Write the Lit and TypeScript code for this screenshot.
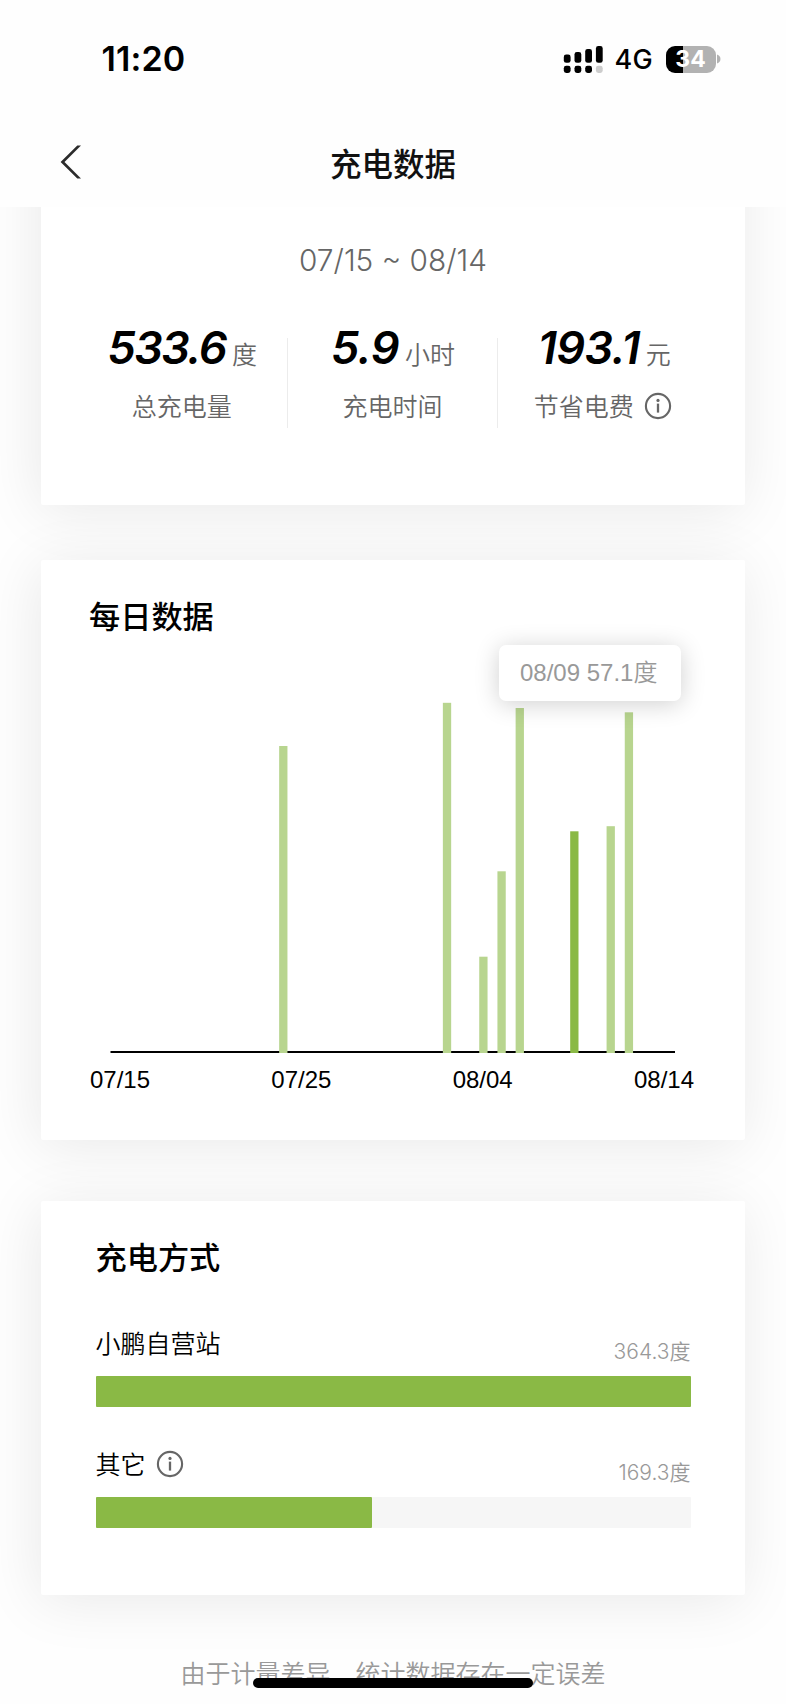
import { LitElement, html, css, svg } from "lit";
import { customElement } from "lit/decorators.js";
import { styleMap } from "lit/directives/style-map.js";

interface Bar {
  day: number;
  height: number;
  active?: boolean;
}

const BAND = 18.19;
const CHART_HEIGHT = 352;

const bars: Bar[] = [
  { day: 9, height: 307 },
  { day: 18, height: 350.2 },
  { day: 20, height: 96.3 },
  { day: 21, height: 181.7 },
  { day: 22, height: 345 },
  { day: 25, height: 221.7, active: true },
  { day: 27, height: 226.8 },
  { day: 28, height: 340.7 },
];

const infoIcon = html`<svg class="info" width="28" height="28" viewBox="0 0 28 28">
  <circle cx="14" cy="14" r="12.1" fill="none" stroke="#666" stroke-width="2.1" />
  <circle cx="14" cy="8.4" r="1.6" fill="#666" />
  <path d="M14 11.6V20.6" stroke="#666" stroke-width="2.3" />
</svg>`;

@customElement("app-root")
export class AppRoot extends LitElement {
  static styles = css`
    :host {
      display: block;
      font-family: Inter, "Noto Sans CJK SC", sans-serif;
    }
    .screen {
      position: relative;
      display: flex;
      flex-direction: column;
      width: 786px;
      height: 1704px;
      overflow: hidden;
      background: #fefefe;
      color: #000;
    }
    .status {
      display: flex;
      align-items: center;
      justify-content: space-between;
      height: 118px;
      box-sizing: border-box;
      padding: 0 65px 0 101.5px;
    }
    .time {
      font-size: 34px;
      font-weight: 600;
      letter-spacing: 0.1px;
      padding-bottom: 2px;
    }
    .indicators {
      display: flex;
      align-items: center;
    }
    .signal {
      margin-right: 12px;
    }
    .net {
      font-size: 27px;
      letter-spacing: 0.2px;
      font-weight: 450;
      width: 51px;
      line-height: 30px;
      padding-top: 1px;
      box-sizing: border-box;
    }
    .battery {
      display: flex;
      align-items: center;
      gap: 1.5px;
    }
    .cell {
      width: 50px;
      height: 27px;
      border-radius: 9px;
      background: linear-gradient(90deg, #000 17.5px, #b2b2b2 17.5px);
      color: #fff;
      font-size: 23px;
      font-weight: 700;
      line-height: 27px;
      text-align: center;
    }
    .nav {
      display: grid;
      grid-template-columns: 100px 1fr 100px;
      align-items: center;
      height: 89px;
    }
    .back {
      display: block;
      margin-left: 60px;
      margin-top: -1px;
    }
    .title {
      text-align: center;
      font-size: 31.5px;
      font-weight: 500;
      line-height: 40px;
      padding-top: 4px;
      color: #111;
    }
    .content {
      flex: 1;
      overflow: hidden;
      padding: 0 41px;
    }
    .card {
      box-sizing: border-box;
      width: 704px;
      background: #fff;
      border-radius: 2px;
      box-shadow: -3px 6px 58px rgba(0, 0, 0, 0.085);
    }
    .summary {
      height: 398px;
      margin-top: -100px;
      padding-top: 131px;
    }
    .daily {
      height: 580px;
      margin-top: 55px;
      padding: 36px 0 0;
    }
    .methods {
      height: 394px;
      margin-top: 61px;
      padding: 36px 54.5px 0;
    }
    .range {
      text-align: center;
      font-size: 29.8px;
      font-weight: 330;
      line-height: 44px;
      color: #666;
    }
    .stats {
      display: grid;
      grid-template-columns: repeat(3, 210.8px);
      justify-content: center;
      margin-top: 56px;
    }
    .stat {
      box-sizing: border-box;
      height: 90px;
      border-right: 1px solid #ececec;
      display: flex;
      flex-direction: column;
      align-items: center;
    }
    .stat:last-child {
      border-right: none;
    }
    .figure {
      display: flex;
      align-items: baseline;
      gap: 6px;
      line-height: 50px;
      height: 50px;
      margin-top: -15px;
      padding-left: 1px;
    }
    .num {
      font-size: 45px;
      font-weight: 560;
      font-style: italic;
      letter-spacing: -0.6px;
    }
    .stat:first-child .num {
      letter-spacing: -1.6px;
    }
    .unit,
    .label {
      font-size: 25px;
      font-weight: 350;
      color: #666;
    }
    .label {
      display: flex;
      align-items: center;
      gap: 10px;
      line-height: 36px;
      margin-top: 16px;
    }
    .stat:last-child .label {
      margin-left: -2px;
    }
    .info {
      display: block;
      margin-top: -2px;
    }
    .heading {
      font-size: 31.2px;
      font-weight: 500;
      line-height: 42px;
    }
    .daily .heading {
      margin-left: 48px;
    }
    .chart {
      position: relative;
      margin-left: 69px;
      width: 566px;
      padding-top: 63px;
    }
    .plot {
      display: block;
    }
    .ticks {
      display: flex;
      justify-content: space-between;
      margin: 10px -20px 0 -20px;
      width: 604px;
      font: 24px/32px "Liberation Sans", sans-serif;
    }
    .tip {
      position: absolute;
      left: 389px;
      top: 7px;
      width: 182px;
      height: 56px;
      box-sizing: border-box;
      padding-left: 21px;
      border-radius: 7px;
      background: #fff;
      box-shadow: 0 3px 24px rgba(0, 0, 0, 0.19);
      font: 350 24px/56px "Liberation Sans", "Noto Sans CJK SC", sans-serif;
      color: #999;
      white-space: nowrap;
    }
    .method {
      height: 121px;
    }
    .methods .heading {
      margin-bottom: 25px;
    }
    .row {
      display: flex;
      justify-content: space-between;
      height: 72px;
      box-sizing: border-box;
      padding-top: 18px;
    }
    .name {
      display: flex;
      align-items: center;
      gap: 10px;
      height: 40px;
      font-size: 25px;
      font-weight: 350;
    }
    .name .info {
      margin-top: 2px;
    }
    .value {
      font-size: 21px;
      font-weight: 330;
      line-height: 30px;
      padding-top: 15px;
      color: #999;
    }
    .track {
      height: 30.5px;
      background: #f6f6f6;
      border-radius: 1px;
    }
    .fill {
      height: 100%;
      background: #8ab945;
      border-radius: 1px;
    }
    .note {
      margin-top: 61px;
      text-align: center;
      font-size: 25px;
      font-weight: 350;
      line-height: 36px;
      color: #999;
      white-space: nowrap;
    }
    .comma {
      display: inline-block;
      line-height: 30px;
      vertical-align: -1px;
    }
    .home {
      position: absolute;
      left: 253px;
      top: 1678px;
      width: 280px;
      height: 10px;
      border-radius: 5px;
      background: #000;
    }
  `;

  private signal() {
    const tops = [8.5, 6, 3, 0];
    return html`<svg class="signal" width="40" height="27" viewBox="0 0 40 27">
      ${tops.map(
        (y, i) => svg`
          <rect x=${0.8 + i * 10.7} y=${y} width="6.8" height=${16.8 - y} rx="2.4" />
          <rect x=${0.8 + i * 10.7} y="19.8" width="6.8" height="7.2" rx="2.4" fill=${i === 3 ? "#ccc" : "#000"} />`
      )}
    </svg>`;
  }

  private stat(num: string, unit: string, label: string, info = false) {
    return html`<div class="stat">
      <div class="figure"><span class="num">${num}</span><span class="unit">${unit}</span></div>
      <div class="label">${label}${info ? infoIcon : ""}</div>
    </div>`;
  }

  private method(name: string, value: string, percent: number, info = false) {
    return html`<div class="method">
      <div class="row">
        <div class="name">${name}${info ? infoIcon : ""}</div>
        <div class="value">${value}</div>
      </div>
      <div class="track">
        <div class="fill" style=${styleMap({ width: `${percent}%` })}></div>
      </div>
    </div>`;
  }

  render() {
    return html`<div class="screen">
      <div class="status">
        <div class="time">11:20</div>
        <div class="indicators">
          ${this.signal()}
          <div class="net">4G</div>
          <div class="battery">
            <div class="cell">34</div>
            <svg width="4" height="10" viewBox="0 0 4 10"><path d="M0 0.5C4.6 2 4.6 8 0 9.5Z" fill="#b2b2b2" /></svg>
          </div>
        </div>
      </div>
      <div class="nav">
        <svg class="back" width="22" height="34" viewBox="0 0 22 34">
          <path d="M17.3 0.5H21L4.5 17L21 33.5H17.3L0.6 17Z" fill="#2b2b2b" />
        </svg>
        <div class="title">充电数据</div>
      </div>
      <div class="content">
        <div class="card summary">
          <div class="range">07/15 ~ 08/14</div>
          <div class="stats">
            ${this.stat("533.6", "度", "总充电量")} ${this.stat("5.9", "小时", "充电时间")}
            ${this.stat("193.1", "元", "节省电费", true)}
          </div>
        </div>
        <div class="card daily">
          <div class="heading">每日数据</div>
          <div class="chart">
            <svg class="plot" width="566" height="353" viewBox="0 0 566 353">
              <rect x="0.5" y="350" width="564.5" height="2" />
              ${bars.map(
                (b) => svg`<rect
                  x=${0.5 + BAND * (b.day + 0.5) - 4.15}
                  y=${CHART_HEIGHT - b.height}
                  width="8.3"
                  height=${b.height}
                  fill=${b.active ? "#8ab945" : "#b8d58f"} />`
              )}
            </svg>
            <div class="ticks"><span>07/15</span><span>07/25</span><span>08/04</span><span>08/14</span></div>
            <div class="tip">08/09 57.1度</div>
          </div>
        </div>
        <div class="card methods">
          <div class="heading">充电方式</div>
          ${this.method("小鹏自营站", "364.3度", 100)} ${this.method("其它", "169.3度", 46.5, true)}
        </div>
        <div class="note">由于计量差异<span class="comma">，</span>统计数据存在一定误差</div>
      </div>
      <div class="home"></div>
    </div>`;
  }
}
